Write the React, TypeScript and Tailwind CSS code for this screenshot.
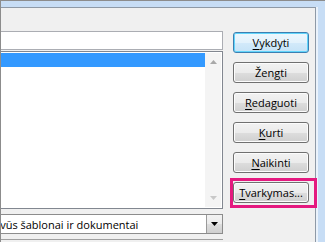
import type { ReactNode } from 'react';

function Btn({ children, focused = false }: { children: ReactNode; focused?: boolean }) {
  return (
    <div
      className={`flex h-[21px] w-[76px] items-center justify-center rounded-[3px] border text-[11px] leading-none text-black ${
        focused
          ? 'border-[#3c7fb1] bg-[linear-gradient(180deg,#eef7fd_0%,#e3f2fc_50%,#d3eafa_51%,#c6e3f7_100%)] shadow-[inset_0_0_0_1px_#62d5fb]'
          : 'border-[#707070] bg-[linear-gradient(180deg,#f2f2f2_0%,#ebebeb_50%,#dddddd_51%,#cfcfcf_100%)] shadow-[inset_0_0_0_1px_#fcfcfc]'
      }`}
    >
      <span className="pb-[1px]">{children}</span>
    </div>
  );
}

function Ul({ children }: { children: ReactNode }) {
  return <span className="underline decoration-1 underline-offset-[2px]">{children}</span>;
}

export default function App() {
  return (
    <div
      className="relative h-[242px] w-[325px] overflow-hidden border-l border-t border-[#8c8c8c] bg-[#c7ddf5]"
      style={{ fontFamily: '"Open Sans", "Noto Sans", sans-serif' }}
    >
      <div className="mr-[7px] mt-[6px] h-[236px] border-r-2 border-[#eaf2fb]">
        <div className="flex h-full border-r border-t border-[#8e99a6] bg-[#f0f0f0]">
          {/* left column */}
          <div className="flex w-[222px] flex-col pt-[23px]">
            <div className="h-[19px] border border-l-0 border-[#abadb3] bg-white" />
            <div className="mt-[1px] flex h-[158px] border border-l-0 border-[#828790] bg-white p-[1px] pl-0">
              <div className="flex-1">
                <div className="h-[14px] w-full bg-[#3399ff]" />
              </div>
              <div className="flex w-[16px] flex-col items-center justify-between bg-[#f4f4f4] py-[7px]">
                <svg width="7" height="4" viewBox="0 0 7 4">
                  <path d="M0 4 L3.5 0 L7 4 Z" fill="#a8a8a8" />
                </svg>
                <svg width="7" height="4" viewBox="0 0 7 4">
                  <path d="M0 0 L3.5 4 L7 0 Z" fill="#c8c8c8" />
                </svg>
              </div>
            </div>
            <div className="mt-[5px] flex h-[20px] items-center overflow-hidden border border-l-0 border-[#8c8c8c] bg-white">
              <div className="flex-1 overflow-hidden whitespace-nowrap text-[11px] leading-none text-black">
                <span className="ml-[-23px] inline-block">Aktyvūs šablonai ir dokumentai</span>
              </div>
              <div className="flex h-full w-[16px] items-center justify-center border-l border-[#9a9a9a] bg-[linear-gradient(180deg,#f2f2f2_0%,#ebebeb_50%,#dddddd_51%,#cfcfcf_100%)]">
                <svg width="7" height="4" viewBox="0 0 7 4">
                  <path d="M0 0 L3.5 4 L7 0 Z" fill="#000" />
                </svg>
              </div>
            </div>
            <div className="mt-[5px] border-t border-[#a0a0a0]" />
          </div>

          {/* buttons column */}
          <div className="ml-[10px] flex flex-col gap-[9px] pt-[24px]">
            <Btn focused>
              <Ul>V</Ul>ykdyti
            </Btn>
            <Btn>
              Žen<Ul>g</Ul>ti
            </Btn>
            <Btn>
              <Ul>R</Ul>edaguoti
            </Btn>
            <Btn>
              <Ul>K</Ul>urti
            </Btn>
            <Btn>
              <Ul>N</Ul>aikinti
            </Btn>
            <Btn>
              <Ul>T</Ul>varkymas...
            </Btn>
          </div>
        </div>
      </div>

      {/* highlight annotation */}
      <div className="absolute left-[229px] top-[177px] h-[30px] w-[87px] border-[3px] border-[#e4197f]" />
    </div>
  );
}
